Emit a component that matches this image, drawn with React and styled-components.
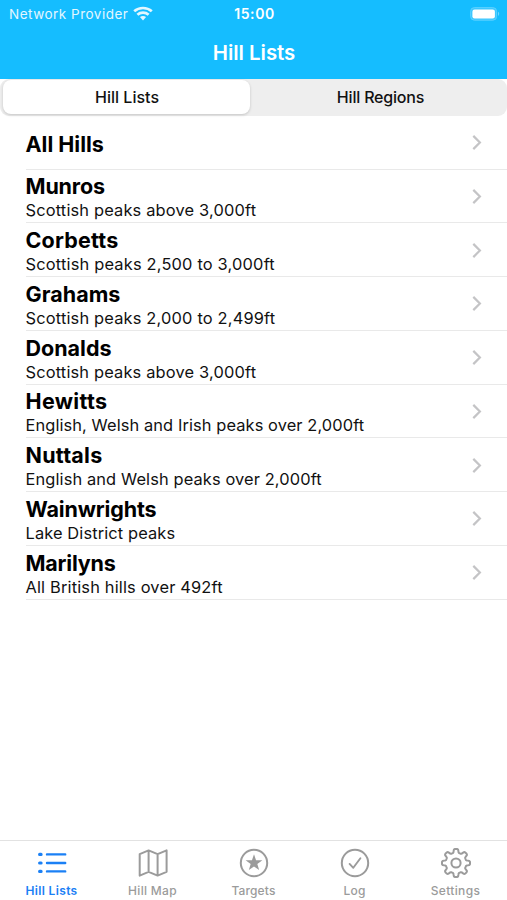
import React from "react";
import styled, { createGlobalStyle } from "styled-components";

const GlobalStyle = createGlobalStyle`
  * { box-sizing: border-box; }
  body {
    margin: 0;
    background: #fff;
    color: #000;
    font-family: Inter, "Liberation Sans", sans-serif;
  }
`;

const Screen = styled.div`
  display: flex;
  flex-direction: column;
  width: 507px;
  height: 900px;
  overflow: hidden;
`;

const Header = styled.header`
  flex: none;
  height: 79.3px;
  background: #15bdff;
  color: #fff;
`;

const StatusBar = styled.div`
  display: grid;
  grid-template-columns: 1fr auto 1fr;
  align-items: center;
  height: 27px;
  padding: 0 7px 0 9px;
`;

const Carrier = styled.div`
  display: flex;
  align-items: center;
  gap: 4.5px;
  font-size: 13.5px;
  letter-spacing: 0.5px;
  opacity: 0.88;
  white-space: nowrap;
`;

const Clock = styled.div`
  font-size: 14px;
  font-weight: 600;
  letter-spacing: 0.6px;
`;

const BatteryIcon = styled.svg`
  justify-self: end;
  display: block;
`;

const Title = styled.h1`
  margin: 0;
  padding-left: 1px;
  height: 52px;
  line-height: 52px;
  text-align: center;
  font-size: 20.4px;
  font-weight: 600;
`;

const Segments = styled.div`
  flex: none;
  display: flex;
  height: 36.5px;
  padding: 1.2px 0 2px 3px;
  background: #eee;
  border-radius: 9px;
`;

const Segment = styled.button`
  flex: 0 0 ${(p) => (p.$active ? "247px" : "257px")};
  padding: 0 0 1px ${(p) => (p.$active ? "1px" : "4px")};
  border: 0;
  border-radius: 8px;
  background: ${(p) => (p.$active ? "#fff" : "transparent")};
  box-shadow: ${(p) => (p.$active ? "0 1px 3px rgba(0, 0, 0, 0.18)" : "none")};
  color: #111;
  font: 500 16px Inter, sans-serif;
  letter-spacing: ${(p) => p.$track}px;
`;

const List = styled.ul`
  flex: 1;
  margin: 0;
  padding: 0 0 0 25.5px;
  list-style: none;
`;

const Row = styled.li`
  display: flex;
  align-items: center;
  justify-content: space-between;
  height: 53.75px;
  padding-right: 24px;
  border-bottom: 1px solid #e9e9e9;
`;

const RowText = styled.div`
  padding-top: 2.8px;
  white-space: nowrap;
`;

const Name = styled.div`
  font-size: 21.5px;
  font-weight: 700;
  line-height: 26px;
  letter-spacing: ${(p) => p.$track}px;
`;

const Detail = styled.div`
  color: #111;
  font-size: 16.4px;
  line-height: 22px;
  letter-spacing: ${(p) => p.$track}px;
`;

const TabBar = styled.nav`
  flex: none;
  display: grid;
  grid-template-columns: repeat(5, 1fr);
  height: 60.5px;
  border-top: 1.5px solid #e2e2e2;
  padding: 6.5px 1px 0;
`;

const Tab = styled.a`
  display: flex;
  flex-direction: column;
  align-items: center;
  color: ${(p) => (p.$active ? "#1b80f5" : "#9b9b9b")};
  font-size: 12px;
  font-weight: ${(p) => (p.$active ? 600 : 500)};
  letter-spacing: ${(p) => p.$track}px;
  line-height: 16px;
`;

const TabIcon = styled.svg`
  display: block;
  margin-bottom: 4px;
  fill: none;
  stroke: currentColor;
  stroke-width: 2;
  stroke-linecap: round;
  stroke-linejoin: round;
`;

const hills = [
  { name: "All Hills", track: 0 },
  { name: "Munros", track: -0.15, detail: "Scottish peaks above 3,000ft", detailTrack: 0.17 },
  { name: "Corbetts", track: 0.2, detail: "Scottish peaks 2,500 to 3,000ft", detailTrack: 0.19 },
  { name: "Grahams", track: 0.05, detail: "Scottish peaks 2,000 to 2,499ft", detailTrack: 0.18 },
  { name: "Donalds", track: 0, detail: "Scottish peaks above 3,000ft", detailTrack: 0.17 },
  { name: "Hewitts", track: 0.32, detail: "English, Welsh and Irish peaks over 2,000ft", detailTrack: 0.1 },
  { name: "Nuttals", track: 0.25, detail: "English and Welsh peaks over 2,000ft", detailTrack: 0.12 },
  { name: "Wainwrights", track: -0.15, detail: "Lake District peaks", detailTrack: 0.12 },
  { name: "Marilyns", track: -0.2, detail: "All British hills over 492ft", detailTrack: 0.17 },
];

// Eight-toothed cog outline, sampled around the circle with softened square teeth.
const gearPath =
  Array.from({ length: 160 }, (_, i) => {
    const a = (i / 160) * Math.PI * 2;
    const r = 12.2 + 1.85 * Math.tanh(2.6 * Math.cos(8 * a));
    return `${i ? "L" : "M"}${(16 + r * Math.sin(a)).toFixed(2)} ${(16 - r * Math.cos(a)).toFixed(2)}`;
  }).join("") + "Z";

const starPath =
  Array.from({ length: 10 }, (_, i) => {
    const a = (i / 10) * Math.PI * 2;
    const r = i % 2 ? 3.5 : 8.8;
    return `${i ? "L" : "M"}${(16 + r * Math.sin(a)).toFixed(2)} ${(16 - r * Math.cos(a)).toFixed(2)}`;
  }).join("") + "Z";

const tabs = [
  {
    label: "Hill Lists",
    track: 0.35,
    icon: (
      <>
        <path d="M11 7.4H29.2M11 16H29.2M11 24.4H29.2" strokeWidth="2.4" />
        <path d="M3.6 7.4H5.1M3.6 16H5.1M3.6 24.4H5.1" strokeWidth="3.1" />
      </>
    ),
  },
  {
    label: "Hill Map",
    track: 0.3,
    icon: <path d="M2.7 7.2L11.6 3.4L20.6 7.2L29.6 3.4V24.8L20.6 28.6L11.6 24.8L2.7 28.6ZM11.6 3.4V24.8M20.6 7.2V28.6" />,
  },
  {
    label: "Targets",
    track: 0.15,
    icon: (
      <>
        <circle cx="16" cy="16" r="13.2" />
        <path d={starPath} fill="currentColor" stroke="none" />
      </>
    ),
  },
  {
    label: "Log",
    track: 0.2,
    icon: (
      <>
        <circle cx="16" cy="16" r="13.2" />
        <path d="M10.6 16.9L14.3 20.8L21.4 11.2" strokeWidth="1.9" />
      </>
    ),
  },
  {
    label: "Settings",
    track: 0.35,
    icon: (
      <>
        <path d={gearPath} />
        <circle cx="16" cy="16" r="4.6" />
      </>
    ),
  },
];

const Wifi = () => (
  <svg width="20" height="15" viewBox="0 0 20 15" fill="none" stroke="#fff" strokeWidth="2.7">
    <path d="M1.2 5.3C6 0.9 14 0.9 18.8 5.3" />
    <path d="M4.4 8.8C7.5 6 12.5 6 15.6 8.8" />
    <path d="M10 14.4L6.9 11.1C8.6 9.6 11.4 9.6 13.1 11.1Z" fill="#fff" stroke="none" />
  </svg>
);

const Battery = () => (
  <BatteryIcon width="30" height="14" viewBox="0 0 30 14">
    <rect x="0.6" y="0.6" width="26" height="12.6" rx="3.8" fill="#3cc7ff" stroke="#62d2ff" strokeWidth="0.9" />
    <rect x="2.4" y="2.6" width="22.5" height="8.8" rx="2.2" fill="#fff" />
    <path d="M28 4.8C29.6 5.5 29.6 8.3 28 9Z" fill="#6fd6ff" />
  </BatteryIcon>
);

const Chevron = () => (
  <svg width="12" height="18" viewBox="0 0 12 18" fill="none" stroke="#c4c4c6" strokeWidth="2.2">
    <path d="M2.3 2.9L8.9 9.5L2.3 16.1" />
  </svg>
);

export default function App() {
  return (
    <Screen>
      <GlobalStyle />
      <Header>
        <StatusBar>
          <Carrier>
            Network Provider
            <Wifi />
          </Carrier>
          <Clock>15:00</Clock>
          <Battery />
        </StatusBar>
        <Title>Hill Lists</Title>
      </Header>
      <Segments>
        <Segment $active $track={0.02}>Hill Lists</Segment>
        <Segment $track={-0.2}>Hill Regions</Segment>
      </Segments>
      <List>
        {hills.map((h) => (
          <Row key={h.name}>
            <RowText>
              <Name $track={h.track}>{h.name}</Name>
              {h.detail && <Detail $track={h.detailTrack}>{h.detail}</Detail>}
            </RowText>
            <Chevron />
          </Row>
        ))}
      </List>
      <TabBar>
        {tabs.map((t, i) => (
          <Tab key={t.label} $active={i === 0} $track={t.track}>
            <TabIcon width="32" height="32" viewBox="0 0 32 32">{t.icon}</TabIcon>
            {t.label}
          </Tab>
        ))}
      </TabBar>
    </Screen>
  );
}
